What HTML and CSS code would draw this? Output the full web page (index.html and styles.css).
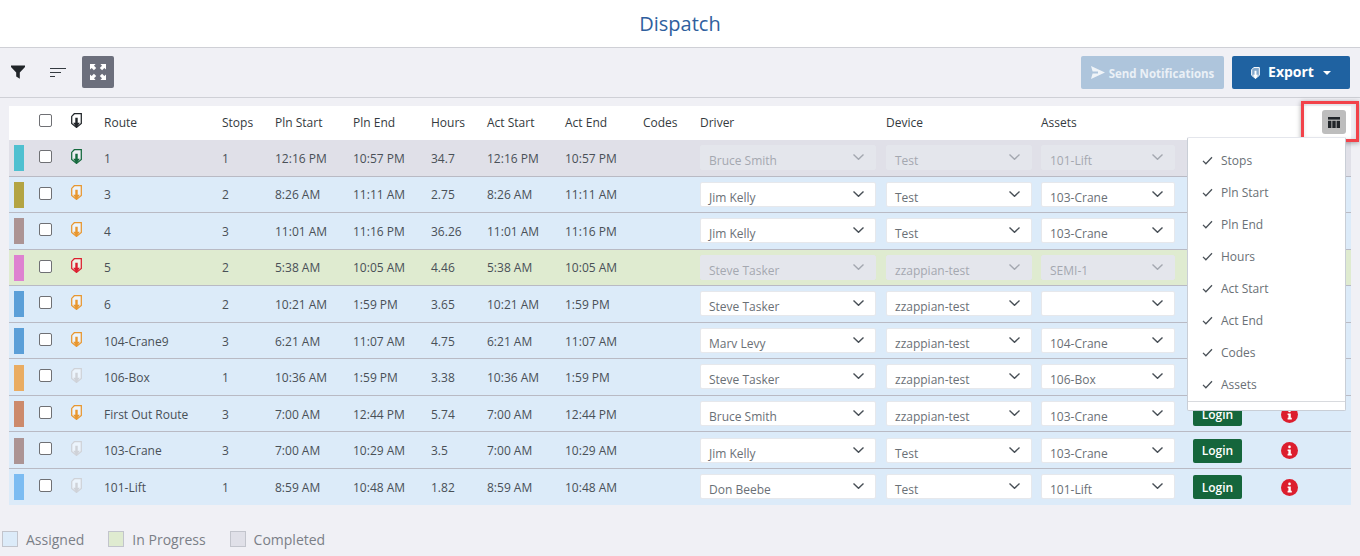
FILE: index.html
```html
<!DOCTYPE html>
<html lang="en">
<head>
<meta charset="utf-8">
<title>Dispatch</title>
<link rel="stylesheet" href="styles.css">
</head>
<body>
<svg class="defs" width="0" height="0" aria-hidden="true">
  <symbol id="pin" viewBox="0 0 11 15">
    <path d="M3.3 .7 H10.3 V10.4 L5.5 14.4 L.7 10.4 V3.4 Z" fill="#fff" fill-opacity=".45" stroke="currentColor" stroke-width="1.25"/>
    <path d="M4.3 4.8 H6.7 V9.8 H8.8 L5.5 14.8 L2.2 9.8 H4.3 Z" fill="currentColor"/>
  </symbol>
  <symbol id="chev" viewBox="0 0 11 6">
    <path d="M.5 .5 L5.5 5.3 L10.5 .5" fill="none" stroke="currentColor" stroke-width="1.4"/>
  </symbol>
  <symbol id="info" viewBox="0 0 17 17">
    <circle cx="8.5" cy="8.5" r="8.5" fill="#dc1e2e"/>
    <rect x="7.2" y="3.6" width="2.6" height="2.6" rx="1.2" fill="#fff"/>
    <path d="M6.6 7.4 H9.8 V11.8 H10.8 V13.4 H6.6 V11.8 H7.4 V9 H6.6 Z" fill="#fff"/>
  </symbol>
  <symbol id="tick" viewBox="0 0 12 10">
    <path d="M1 5.4 L4.2 8.6 L11 1.4" fill="none" stroke="currentColor" stroke-width="1.4"/>
  </symbol>
</svg>

<header class="title-bar"><h1>Dispatch</h1></header>

<section class="toolbar">
  <div class="tool-group">
    <button class="tool tool-filter" aria-label="Filter">
      <svg width="14" height="14" viewBox="0 0 14 14"><path d="M0 0.5 H14 V2 L8.8 7.4 V13.8 L5.2 11.6 V7.4 L0 2 Z" fill="#212529"/></svg>
    </button>
    <button class="tool tool-sort" aria-label="Sort">
      <svg width="16" height="10" viewBox="0 0 16 10"><path d="M0 1.5 H16 M0 5.5 H11 M0 9.5 H5" stroke="#343a40" stroke-width="1" fill="none"/></svg>
    </button>
    <button class="tool tool-expand" aria-label="Expand">
      <svg width="16" height="16" viewBox="0 0 16 16" fill="#fff"><path d="M0 0 H5.6 L4 1.7 L6.2 3.9 L3.9 6.2 L1.7 4 L0 5.6 Z"/><path d="M16 0 H10.4 L12 1.7 L9.8 3.9 L12.1 6.2 L14.3 4 L16 5.6 Z"/><path d="M0 16 H5.6 L4 14.3 L6.2 12.1 L3.9 9.8 L1.7 12 L0 10.4 Z"/><path d="M16 16 H10.4 L12 14.3 L9.8 12.1 L12.1 9.8 L14.3 12 L16 10.4 Z"/></svg>
    </button>
  </div>
  <div class="action-group">
    <button class="btn-send">
      <svg width="14" height="13" viewBox="0 0 14 13"><path d="M0 0 L14 6.5 L0 13 L1.6 7.4 H7 V5.6 H1.6 Z" fill="#fff" fill-opacity=".8"/></svg>
      <span class="send-label">Send Notifications</span>
    </button>
    <button class="btn-export">
      <svg class="export-pin" width="9" height="12"><use href="#pin"/></svg>
      <span class="export-label">Export</span>
      <span class="caret"></span>
    </button>
  </div>
</section>

<main class="grid-wrap">
  <div class="row head">
    <div></div>
    <div><span class="check"></span></div>
    <div><svg class="pin pin-dark"><use href="#pin"/></svg></div>
    <div>Route</div><div>Stops</div><div>Pln Start</div><div>Pln End</div><div>Hours</div><div>Act Start</div><div>Act End</div><div>Codes</div><div>Driver</div><div>Device</div><div>Assets</div><div></div><div></div>
  </div>

  <div class="row completed">
    <div><span class="swatch c-teal"></span></div><div><span class="check"></span></div><div><svg class="pin pin-green"><use href="#pin"/></svg></div>
    <div>1</div><div>1</div><div>12:16 PM</div><div>10:57 PM</div><div>34.7</div><div>12:16 PM</div><div>10:57 PM</div><div></div>
    <div><span class="select w-driver off">Bruce Smith<svg class="chev"><use href="#chev"/></svg></span></div>
    <div><span class="select w-device off">Test<svg class="chev"><use href="#chev"/></svg></span></div>
    <div><span class="select w-asset off">101-Lift<svg class="chev"><use href="#chev"/></svg></span></div>
    <div></div><div></div>
  </div>

  <div class="row assigned">
    <div><span class="swatch c-olive"></span></div><div><span class="check"></span></div><div><svg class="pin pin-orange"><use href="#pin"/></svg></div>
    <div>3</div><div>2</div><div>8:26 AM</div><div>11:11 AM</div><div>2.75</div><div>8:26 AM</div><div>11:11 AM</div><div></div>
    <div><span class="select w-driver">Jim Kelly<svg class="chev"><use href="#chev"/></svg></span></div>
    <div><span class="select w-device">Test<svg class="chev"><use href="#chev"/></svg></span></div>
    <div><span class="select w-asset">103-Crane<svg class="chev"><use href="#chev"/></svg></span></div>
    <div></div><div></div>
  </div>

  <div class="row assigned">
    <div><span class="swatch c-mauve"></span></div><div><span class="check"></span></div><div><svg class="pin pin-orange"><use href="#pin"/></svg></div>
    <div>4</div><div>3</div><div>11:01 AM</div><div>11:16 PM</div><div>36.26</div><div>11:01 AM</div><div>11:16 PM</div><div></div>
    <div><span class="select w-driver">Jim Kelly<svg class="chev"><use href="#chev"/></svg></span></div>
    <div><span class="select w-device">Test<svg class="chev"><use href="#chev"/></svg></span></div>
    <div><span class="select w-asset">103-Crane<svg class="chev"><use href="#chev"/></svg></span></div>
    <div></div><div></div>
  </div>

  <div class="row progress">
    <div><span class="swatch c-pink"></span></div><div><span class="check"></span></div><div><svg class="pin pin-red"><use href="#pin"/></svg></div>
    <div>5</div><div>2</div><div>5:38 AM</div><div>10:05 AM</div><div>4.46</div><div>5:38 AM</div><div>10:05 AM</div><div></div>
    <div><span class="select w-driver off">Steve Tasker<svg class="chev"><use href="#chev"/></svg></span></div>
    <div><span class="select w-device off">zzappian-test<svg class="chev"><use href="#chev"/></svg></span></div>
    <div><span class="select w-asset off">SEMI-1<svg class="chev"><use href="#chev"/></svg></span></div>
    <div></div><div></div>
  </div>

  <div class="row assigned">
    <div><span class="swatch c-blue"></span></div><div><span class="check"></span></div><div><svg class="pin pin-orange"><use href="#pin"/></svg></div>
    <div>6</div><div>2</div><div>10:21 AM</div><div>1:59 PM</div><div>3.65</div><div>10:21 AM</div><div>1:59 PM</div><div></div>
    <div><span class="select w-driver">Steve Tasker<svg class="chev"><use href="#chev"/></svg></span></div>
    <div><span class="select w-device">zzappian-test<svg class="chev"><use href="#chev"/></svg></span></div>
    <div><span class="select w-asset"><svg class="chev"><use href="#chev"/></svg></span></div>
    <div></div><div></div>
  </div>

  <div class="row assigned">
    <div><span class="swatch c-blue"></span></div><div><span class="check"></span></div><div><svg class="pin pin-orange"><use href="#pin"/></svg></div>
    <div>104-Crane9</div><div>3</div><div>6:21 AM</div><div>11:07 AM</div><div>4.75</div><div>6:21 AM</div><div>11:07 AM</div><div></div>
    <div><span class="select w-driver">Marv Levy<svg class="chev"><use href="#chev"/></svg></span></div>
    <div><span class="select w-device">zzappian-test<svg class="chev"><use href="#chev"/></svg></span></div>
    <div><span class="select w-asset">104-Crane<svg class="chev"><use href="#chev"/></svg></span></div>
    <div></div><div></div>
  </div>

  <div class="row assigned">
    <div><span class="swatch c-sand"></span></div><div><span class="check"></span></div><div><svg class="pin pin-grey"><use href="#pin"/></svg></div>
    <div>106-Box</div><div>1</div><div>10:36 AM</div><div>1:59 PM</div><div>3.38</div><div>10:36 AM</div><div>1:59 PM</div><div></div>
    <div><span class="select w-driver">Steve Tasker<svg class="chev"><use href="#chev"/></svg></span></div>
    <div><span class="select w-device">zzappian-test<svg class="chev"><use href="#chev"/></svg></span></div>
    <div><span class="select w-asset">106-Box<svg class="chev"><use href="#chev"/></svg></span></div>
    <div></div><div></div>
  </div>

  <div class="row assigned">
    <div><span class="swatch c-clay"></span></div><div><span class="check"></span></div><div><svg class="pin pin-orange"><use href="#pin"/></svg></div>
    <div>First Out Route</div><div>3</div><div>7:00 AM</div><div>12:44 PM</div><div>5.74</div><div>7:00 AM</div><div>12:44 PM</div><div></div>
    <div><span class="select w-driver">Bruce Smith<svg class="chev"><use href="#chev"/></svg></span></div>
    <div><span class="select w-device">zzappian-test<svg class="chev"><use href="#chev"/></svg></span></div>
    <div><span class="select w-asset">103-Crane<svg class="chev"><use href="#chev"/></svg></span></div>
    <div><button class="btn-login">Login</button></div><div><svg class="info"><use href="#info"/></svg></div>
  </div>

  <div class="row assigned">
    <div><span class="swatch c-mauve"></span></div><div><span class="check"></span></div><div><svg class="pin pin-grey"><use href="#pin"/></svg></div>
    <div>103-Crane</div><div>3</div><div>7:00 AM</div><div>10:29 AM</div><div>3.5</div><div>7:00 AM</div><div>10:29 AM</div><div></div>
    <div><span class="select w-driver">Jim Kelly<svg class="chev"><use href="#chev"/></svg></span></div>
    <div><span class="select w-device">Test<svg class="chev"><use href="#chev"/></svg></span></div>
    <div><span class="select w-asset">103-Crane<svg class="chev"><use href="#chev"/></svg></span></div>
    <div><button class="btn-login">Login</button></div><div><svg class="info"><use href="#info"/></svg></div>
  </div>

  <div class="row assigned last">
    <div><span class="swatch c-sky"></span></div><div><span class="check"></span></div><div><svg class="pin pin-grey"><use href="#pin"/></svg></div>
    <div>101-Lift</div><div>1</div><div>8:59 AM</div><div>10:48 AM</div><div>1.82</div><div>8:59 AM</div><div>10:48 AM</div><div></div>
    <div><span class="select w-driver">Don Beebe<svg class="chev"><use href="#chev"/></svg></span></div>
    <div><span class="select w-device">Test<svg class="chev"><use href="#chev"/></svg></span></div>
    <div><span class="select w-asset">101-Lift<svg class="chev"><use href="#chev"/></svg></span></div>
    <div><button class="btn-login">Login</button></div><div><svg class="info"><use href="#info"/></svg></div>
  </div>

  <div class="col-highlight">
    <button class="col-btn" aria-label="Columns">
      <svg width="12" height="11" viewBox="0 0 12 11" fill="#212529"><rect width="12" height="2.6"/><rect y="3.8" width="3.4" height="7.2"/><rect x="4.3" y="3.8" width="3.4" height="7.2"/><rect x="8.6" y="3.8" width="3.4" height="7.2"/></svg>
    </button>
  </div>

  <ul class="col-menu">
    <li><svg class="tick"><use href="#tick"/></svg>Stops</li>
    <li><svg class="tick"><use href="#tick"/></svg>Pln Start</li>
    <li><svg class="tick"><use href="#tick"/></svg>Pln End</li>
    <li><svg class="tick"><use href="#tick"/></svg>Hours</li>
    <li><svg class="tick"><use href="#tick"/></svg>Act Start</li>
    <li><svg class="tick"><use href="#tick"/></svg>Act End</li>
    <li><svg class="tick"><use href="#tick"/></svg>Codes</li>
    <li><svg class="tick"><use href="#tick"/></svg>Assets</li>
  </ul>
</main>

<footer class="legend">
  <span class="legend-item"><i class="key k-assigned"></i>Assigned</span>
  <span class="legend-item"><i class="key k-progress"></i>In Progress</span>
  <span class="legend-item"><i class="key k-completed"></i>Completed</span>
</footer>
</body>
</html>
```
FILE: styles.css
```css
* { box-sizing: border-box; }
html, body { margin: 0; height: 556px; overflow: hidden; }
body {
  background: #f0f0f5;
  font-family: "Open Sans", "Noto Sans", sans-serif;
  font-size: 12px;
  color: #495057;
}
.defs { position: absolute; }
button { font-family: inherit; border: 0; padding: 0; }

.title-bar {
  height: 48px;
  background: #fff;
  border-bottom: 1px solid #cfd0d6;
  display: flex;
  align-items: center;
  justify-content: center;
}
.title-bar h1 { margin: 0; font-size: 20px; font-weight: 400; color: #2f5f9e; }

.toolbar {
  height: 50px;
  border-bottom: 1px solid #cfd0d6;
  display: flex;
  align-items: flex-start;
  justify-content: space-between;
  padding: 8px 10px 0 11px;
}
.tool-group { display: flex; align-items: center; }
.tool { background: none; display: flex; align-items: center; justify-content: center; }
.tool-filter { width: 14px; height: 32px; margin-right: 25px; }
.tool-sort { width: 16px; height: 32px; margin-right: 16px; }
.tool-expand { width: 32px; height: 32px; background: #6c6f7c; border-radius: 2px; }

.action-group { display: flex; align-items: center; gap: 8px; }
.btn-send {
  width: 143px;
  height: 33px;
  background: #aec5dc;
  color: #eaf0f6;
  border-radius: 2px;
  font-size: 11.5px;
  font-weight: 700;
  display: flex;
  align-items: center;
  justify-content: center;
  gap: 4px;
}
.send-label { position: relative; top: 1px; }
.btn-export {
  width: 118px;
  height: 33px;
  background: #1f62a1;
  color: #fff;
  border-radius: 2px;
  font-size: 14px;
  font-weight: 700;
  display: flex;
  align-items: center;
  justify-content: center;
}
.export-label { position: relative; top: -1px; }
.export-pin { margin-right: 8px; color: #fff; }
.caret {
  margin-left: 9px;
  width: 0;
  height: 0;
  border: 4px solid transparent;
  border-top: 4px solid #fff;
  border-bottom: 0;
}

.grid-wrap {
  position: relative;
  margin: 8px 9px 0;
}
.row {
  display: grid;
  grid-template-columns: 30px 32px 33px 118px 53px 78px 78px 56px 78px 78px 57px 186px 155px 152px 88px 70px;
  align-items: center;
  height: 36.55px;
  border-bottom: 1px solid #b9bac4;
}
.row.last { border-bottom: 0; height: 35.6px; }
.row.head {
  height: 34px;
  background: #fff;
  color: #343a40;
  border-bottom: 0;
  padding-bottom: 2px;
}
.row.assigned { background: #dcebf9; }
.row.progress { background: #dfebd0; }
.row.completed { background: #e0e0e8; }
.row > div { display: flex; align-items: center; white-space: nowrap; padding-top: 1px; }

.swatch { width: 10px; height: 26px; margin-left: 5px; }
.c-teal { background: #4fc0d0; }
.c-olive { background: #b3a443; }
.c-mauve { background: #ac9494; }
.c-pink { background: #de82d0; }
.c-blue { background: #5b9fd8; }
.c-sand { background: #e9ac62; }
.c-clay { background: #cc8a6c; }
.c-sky { background: #7cbcf2; }

.check {
  width: 13px;
  height: 13px;
  background: #fff;
  border: 1px solid #6f7074;
  border-radius: 2px;
  margin-bottom: 3.4px;
}
.pin { width: 11px; height: 15px; margin-bottom: 4px; }
.pin-dark { color: #212529; }
.pin-green { color: #15693d; }
.pin-orange { color: #e8962e; }
.pin-red { color: #dc1e2e; }
.pin-grey { color: #cfd2d8; }

.select {
  position: relative;
  display: block;
  height: 25px;
  line-height: 29px;
  background: #fff;
  border: 1px solid #e6e8ec;
  border-radius: 2px;
  padding-left: 8px;
  margin-bottom: 1.3px;
  color: #6a7076;
}
.select.off { background: #e4e6ec; color: #a4a8b0; border-color: #e4e6ec; }
.w-driver { width: 176px; }
.w-device { width: 146px; }
.w-asset { width: 134px; }
.chev {
  position: absolute;
  right: 11px;
  top: 8px;
  width: 11px;
  height: 6px;
  color: #495057;
}
.select.off .chev { color: #a4a8b0; }

.btn-login {
  width: 49px;
  height: 24px;
  background: #15663c;
  color: #fff;
  border-radius: 2px;
  font-size: 12px;
  font-weight: 600;
}
.info { width: 17px; height: 17px; }

.col-highlight {
  position: absolute;
  left: 1292px;
  top: -5px;
  width: 58px;
  height: 41px;
  border: 3px solid #f2424a;
  box-shadow: 0 1px 5px rgba(0,0,0,.35), inset 0 0 4px rgba(0,0,0,.12);
  display: flex;
  align-items: center;
  justify-content: flex-end;
  padding: 1px 10px 0 0;
}
.col-btn {
  width: 24px;
  height: 24px;
  background: #bdbdbd;
  border-radius: 3px;
  display: flex;
  align-items: center;
  justify-content: center;
}

.col-menu {
  position: absolute;
  left: 1178px;
  top: 31px;
  width: 159px;
  height: 274px;
  margin: 0;
  padding: 6px 0 0;
  list-style: none;
  background: #fff;
  border: 1px solid #c9ced6;
  border-top-color: #e4e6ec;
  border-radius: 2px;
  color: #6a7076;
}
.col-menu::after {
  content: "";
  position: absolute;
  left: 0;
  right: 0;
  bottom: 8px;
  border-top: 1px solid #d8dade;
}
.col-menu li {
  display: flex;
  align-items: center;
  height: 32px;
  padding-left: 14px;
}
.tick { width: 11px; height: 9px; margin-right: 8px; color: #495057; }

.legend {
  display: flex;
  align-items: center;
  padding: 25px 0 0 2px;
  font-size: 14px;
  color: #7b7f87;
  gap: 24px;
}
.legend-item { display: flex; align-items: center; gap: 8px; }
.key { width: 16px; height: 16px; border: 1px solid #c2c4cc; }
.k-assigned { background: #dcebf9; }
.k-progress { background: #dfebd0; }
.k-completed { background: #e0e0e8; }
```
